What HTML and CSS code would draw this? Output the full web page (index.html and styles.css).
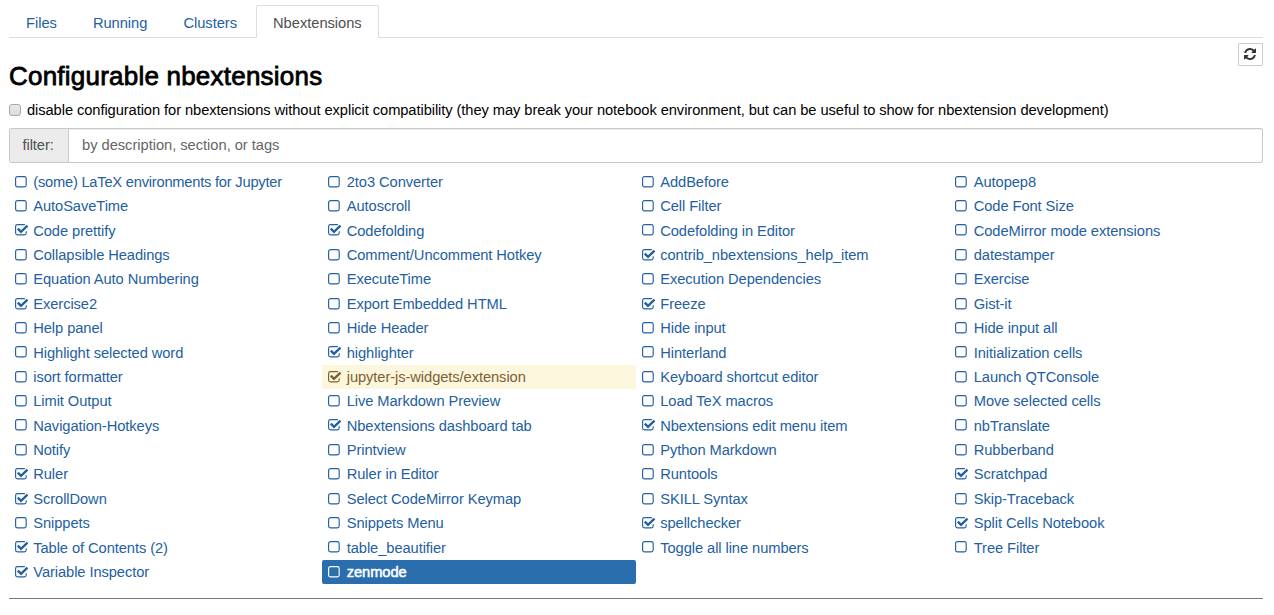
FILE: index.html
```html
<!DOCTYPE html>
<html lang="en">
<head>
<meta charset="utf-8">
<title>Nbextensions</title>
<link rel="stylesheet" href="styles.css">
</head>
<body>
<svg class="sprite" aria-hidden="true">
  <symbol id="off" viewBox="0 0 14 12"><rect x=".6" y=".6" width="10.6" height="10.2" rx="1.9" fill="none" stroke="currentColor" stroke-width="1.15"/></symbol>
  <symbol id="on" viewBox="0 0 14 12"><path d="M10 .8Q9.600.6 9 .6H2.500Q.6.600.6 2.500V8.900Q.6 10.800 2.500 10.800H9.300Q11.200 10.800 11.200 8.900V7.300" fill="none" stroke="currentColor" stroke-width="1.15"/><path d="M2.800 4.700L6 7.900L12.500 1.600" fill="none" stroke="currentColor" stroke-width="2.400"/></symbol>
</svg>
<nav class="tabs"><a class="tab">Files</a><a class="tab">Running</a><a class="tab">Clusters</a><a class="tab active">Nbextensions</a></nav>
<header class="head">
  <h1>Configurable nbextensions</h1>
  <button class="refresh" aria-label="Refresh"><svg viewBox="0 0 1536 1536" width="12" height="12"><path fill="#333" d="M1511 928q0 5-1 7-64 268-268 434.500T764 1536q-146 0-282.500-55T238 1324l-129 129q-19 19-45 19t-45-19-19-45V960q0-26 19-45t45-19h448q26 0 45 19t19 45-19 45l-137 137q71 66 161 102t187 36q134 0 250-65t186-179q11-17 53-117 8-23 30-23h192q13 0 22.500 9.500t9.500 22.500zm25-800v448q0 26-19 45t-45 19h-448q-26 0-45-19t-19-45 19-45l138-138Q969 256 768 256q-134 0-250 65T332 500q-11 17-53 117-8 23-30 23H50q-13 0-22.500-9.500T18 608v-7q65-268 270-434.500T768 0q146 0 284 55.500T1297 212l130-129q19-19 45-19t45 19 19 45z"/></svg></button>
</header>
<label class="compat"><span class="cb"></span><span>disable configuration for nbextensions without explicit compatibility (they may break your notebook environment, but can be useful to show for nbextension development)</span></label>
<div class="filter"><span class="addon">filter:</span><span class="field">by description, section, or tags</span></div>
<main class="grid">
<a class="item tight"><svg><use href="#off"/></svg>(some) LaTeX environments for Jupyter</a>
<a class="item"><svg><use href="#off"/></svg>2to3 Converter</a>
<a class="item"><svg><use href="#off"/></svg>AddBefore</a>
<a class="item"><svg><use href="#off"/></svg>Autopep8</a>
<a class="item"><svg><use href="#off"/></svg>AutoSaveTime</a>
<a class="item"><svg><use href="#off"/></svg>Autoscroll</a>
<a class="item"><svg><use href="#off"/></svg>Cell Filter</a>
<a class="item"><svg><use href="#off"/></svg>Code Font Size</a>
<a class="item"><svg><use href="#on"/></svg>Code prettify</a>
<a class="item"><svg><use href="#on"/></svg>Codefolding</a>
<a class="item"><svg><use href="#off"/></svg>Codefolding in Editor</a>
<a class="item"><svg><use href="#off"/></svg>CodeMirror mode extensions</a>
<a class="item"><svg><use href="#off"/></svg>Collapsible Headings</a>
<a class="item"><svg><use href="#off"/></svg>Comment/Uncomment Hotkey</a>
<a class="item"><svg><use href="#on"/></svg>contrib_nbextensions_help_item</a>
<a class="item"><svg><use href="#off"/></svg>datestamper</a>
<a class="item"><svg><use href="#off"/></svg>Equation Auto Numbering</a>
<a class="item"><svg><use href="#off"/></svg>ExecuteTime</a>
<a class="item"><svg><use href="#off"/></svg>Execution Dependencies</a>
<a class="item"><svg><use href="#off"/></svg>Exercise</a>
<a class="item"><svg><use href="#on"/></svg>Exercise2</a>
<a class="item"><svg><use href="#off"/></svg>Export Embedded HTML</a>
<a class="item"><svg><use href="#on"/></svg>Freeze</a>
<a class="item"><svg><use href="#off"/></svg>Gist-it</a>
<a class="item"><svg><use href="#off"/></svg>Help panel</a>
<a class="item"><svg><use href="#off"/></svg>Hide Header</a>
<a class="item"><svg><use href="#off"/></svg>Hide input</a>
<a class="item"><svg><use href="#off"/></svg>Hide input all</a>
<a class="item"><svg><use href="#off"/></svg>Highlight selected word</a>
<a class="item"><svg><use href="#on"/></svg>highlighter</a>
<a class="item"><svg><use href="#off"/></svg>Hinterland</a>
<a class="item"><svg><use href="#off"/></svg>Initialization cells</a>
<a class="item"><svg><use href="#off"/></svg>isort formatter</a>
<a class="item warn"><svg><use href="#on"/></svg>jupyter-js-widgets/extension</a>
<a class="item"><svg><use href="#off"/></svg>Keyboard shortcut editor</a>
<a class="item"><svg><use href="#off"/></svg>Launch QTConsole</a>
<a class="item"><svg><use href="#off"/></svg>Limit Output</a>
<a class="item"><svg><use href="#off"/></svg>Live Markdown Preview</a>
<a class="item"><svg><use href="#off"/></svg>Load TeX macros</a>
<a class="item"><svg><use href="#off"/></svg>Move selected cells</a>
<a class="item"><svg><use href="#off"/></svg>Navigation-Hotkeys</a>
<a class="item"><svg><use href="#on"/></svg>Nbextensions dashboard tab</a>
<a class="item"><svg><use href="#on"/></svg>Nbextensions edit menu item</a>
<a class="item"><svg><use href="#off"/></svg>nbTranslate</a>
<a class="item"><svg><use href="#off"/></svg>Notify</a>
<a class="item"><svg><use href="#off"/></svg>Printview</a>
<a class="item"><svg><use href="#off"/></svg>Python Markdown</a>
<a class="item"><svg><use href="#off"/></svg>Rubberband</a>
<a class="item"><svg><use href="#on"/></svg>Ruler</a>
<a class="item"><svg><use href="#off"/></svg>Ruler in Editor</a>
<a class="item"><svg><use href="#off"/></svg>Runtools</a>
<a class="item"><svg><use href="#on"/></svg>Scratchpad</a>
<a class="item"><svg><use href="#on"/></svg>ScrollDown</a>
<a class="item"><svg><use href="#off"/></svg>Select CodeMirror Keymap</a>
<a class="item"><svg><use href="#off"/></svg>SKILL Syntax</a>
<a class="item"><svg><use href="#off"/></svg>Skip-Traceback</a>
<a class="item"><svg><use href="#off"/></svg>Snippets</a>
<a class="item"><svg><use href="#off"/></svg>Snippets Menu</a>
<a class="item"><svg><use href="#on"/></svg>spellchecker</a>
<a class="item"><svg><use href="#on"/></svg>Split Cells Notebook</a>
<a class="item"><svg><use href="#on"/></svg>Table of Contents (2)</a>
<a class="item"><svg><use href="#off"/></svg>table_beautifier</a>
<a class="item"><svg><use href="#off"/></svg>Toggle all line numbers</a>
<a class="item"><svg><use href="#off"/></svg>Tree Filter</a>
<a class="item"><svg><use href="#on"/></svg>Variable Inspector</a>
<a class="item sel"><svg><use href="#off"/></svg>zenmode</a>
</main>
<hr class="rule">
</body>
</html>
```
FILE: styles.css
```css
*{box-sizing:border-box}
body{margin:0;padding:5px 11px 0 9px;background:#fff;font:14.7px/20px "Liberation Sans",Arial,sans-serif;letter-spacing:-.08px;color:#000;overflow:hidden}
.sprite{display:none}
.tabs{display:flex;height:33px;border-bottom:1px solid #ddd}
.tab{height:33px;padding:7px 16px 0;border:1px solid transparent;border-radius:2px 2px 0 0;color:#2460a0;margin-right:2px;letter-spacing:-.03px}
.tab.active{color:#505050;background:#fff;border-color:#ddd #ddd #fff}
.head{display:flex;justify-content:space-between;height:62px;padding-top:5px}
h1{margin:18px 0 0;font-size:26px;line-height:30px;font-weight:400;letter-spacing:.22px;-webkit-text-stroke:.8px #000}
.refresh{display:flex;align-items:center;justify-content:center;width:25px;height:23px;padding:0 1px 1px 0;border:1px solid #ccc;border-radius:1px;background:#fff}
.compat{display:flex;align-items:center;height:20px;white-space:nowrap}
.cb{width:12px;height:12px;margin-right:6px;border:1px solid #a6a6a6;border-radius:3px;background:linear-gradient(#e9e9e9,#dcdcdc)}
.filter{display:flex;height:35px;margin-top:8px;border:1px solid #c8c8c8;border-radius:2px}
.addon{width:59px;padding:6px 12.500px;background:#ebebeb;border-right:1px solid #ccc;color:#505050}
.field{flex:1;padding:6px 13px;color:#666;letter-spacing:-.03px;box-shadow:inset 0 1px 1px rgba(0,0,0,.075)}
.grid{display:grid;grid-template-columns:repeat(4,1fr);grid-auto-rows:24.380px;margin-top:6.750px}
.item{display:flex;align-items:center;margin-left:-.5px;padding-left:6px;color:#2460a0;border-radius:2px;white-space:nowrap;letter-spacing:-.08px}
.item.tight{letter-spacing:-.23px}
.item svg{width:14px;height:12px;margin:0 4.750px .5px 0}
.warn{background:#fcf6dd;color:#7c6035}
.sel{background:#2b6eae;color:#fff;-webkit-text-stroke:.5px #fff}
.rule{border:0;border-top:1px solid #777;margin:14px 0 0}
```
